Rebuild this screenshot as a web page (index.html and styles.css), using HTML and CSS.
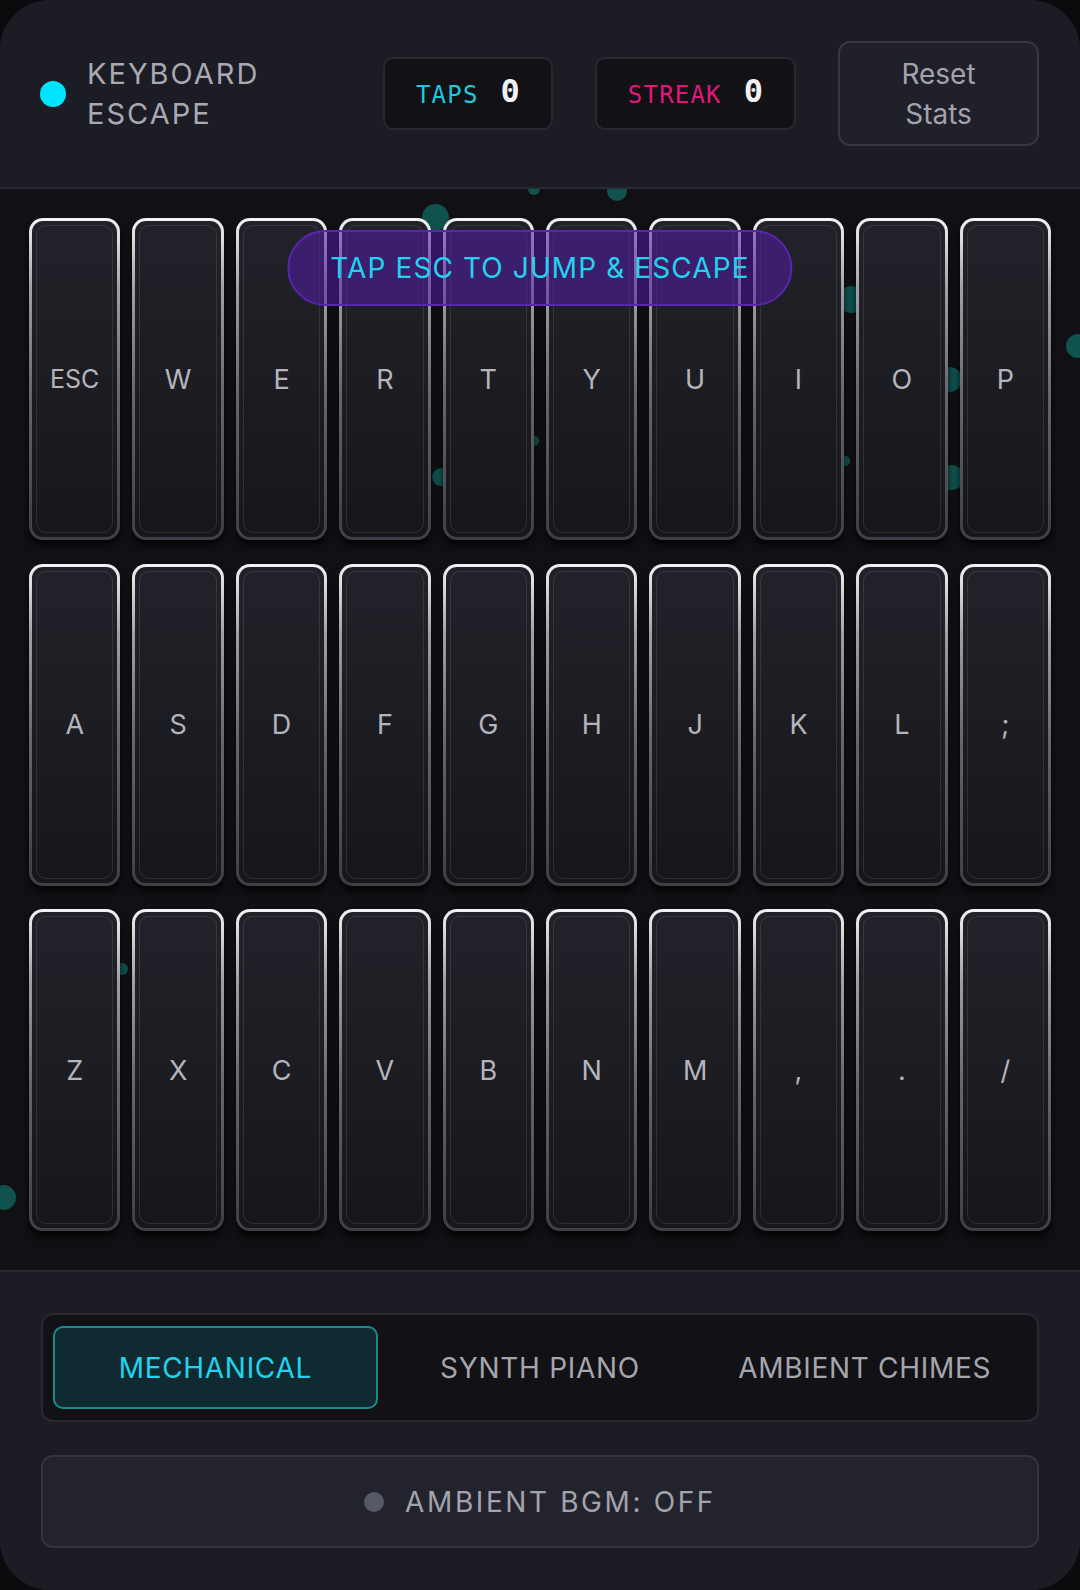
FILE: index.html
```html
<!DOCTYPE html>
<html lang="en">
<head>
    <meta charset="UTF-8">
    <meta name="viewport" content="width=device-width, initial-scale=1.0">
    <title>Keyboard Escape</title>
    <link rel="stylesheet" href="styles.css">
</head>
<body>
    <div class="app">
        <header class="header">
            <span class="status-dot"></span>
            <div class="title">Keyboard<br>Escape</div>
            <div class="header-right">
                <div class="stat">
                    <span class="stat-label taps">TAPS</span>
                    <span class="stat-value" id="taps">0</span>
                </div>
                <div class="stat">
                    <span class="stat-label streak">STREAK</span>
                    <span class="stat-value" id="streak">0</span>
                </div>
                <button class="reset-button">Reset Stats</button>
            </div>
        </header>

        <main class="board">
            <span class="particle" style="left:422px;top:15px;width:27px;height:27px"></span>
            <span class="particle" style="left:528px;top:-6px;width:12px;height:12px"></span>
            <span class="particle" style="left:607px;top:-8px;width:20px;height:20px"></span>
            <span class="particle" style="left:1066px;top:145px;width:24px;height:24px"></span>
            <span class="particle" style="left:838px;top:97px;width:27px;height:27px"></span>
            <span class="particle" style="left:937px;top:178px;width:25px;height:25px"></span>
            <span class="particle" style="left:939px;top:276px;width:25px;height:25px"></span>
            <span class="particle" style="left:840px;top:267px;width:10px;height:10px"></span>
            <span class="particle" style="left:432px;top:279px;width:18px;height:18px"></span>
            <span class="particle" style="left:529px;top:247px;width:10px;height:10px"></span>
            <span class="particle" style="left:-9px;top:996px;width:25px;height:25px"></span>
            <span class="particle" style="left:116px;top:774px;width:12px;height:12px"></span>

            <div class="hint">TAP ESC TO JUMP &amp; ESCAPE</div>

            <div class="keys" id="keys"></div>
        </main>

        <footer class="footer">
            <div class="modes">
                <button class="mode active">MECHANICAL</button>
                <button class="mode">SYNTH PIANO</button>
                <button class="mode">AMBIENT CHIMES</button>
            </div>
            <button class="bgm-button"><span class="bgm-dot"></span>AMBIENT BGM: OFF</button>
        </footer>
    </div>

    <script>
        const rows = [
            ["ESC", "W", "E", "R", "T", "Y", "U", "I", "O", "P"],
            ["A", "S", "D", "F", "G", "H", "J", "K", "L", ";"],
            ["Z", "X", "C", "V", "B", "N", "M", ",", ".", "/"]
        ];

        const keys = document.getElementById('keys');
        rows.forEach(row => {
            row.forEach(label => {
                const key = document.createElement('div');
                key.className = label === "ESC" ? "key key-esc" : "key";
                key.textContent = label;
                keys.appendChild(key);
            });
        });
    </script>
</body>
</html>
```

FILE: styles.css
```css
body {
    margin: 0;
    padding: 0;
    background: #0b0b0e;
    font-family: Inter, "Noto Sans", sans-serif;
}

.app {
    width: 1080px;
    height: 1590px;
    border-radius: 50px;
    overflow: hidden;
    background: #1b1c24;
    display: flex;
    flex-direction: column;
}

/* header */

.header {
    height: 187px;
    flex-shrink: 0;
    display: flex;
    align-items: center;
    padding: 0 41px 0 40px;
    border-bottom: 2px solid #272832;
    background: #1b1c24;
}

.status-dot {
    width: 26px;
    height: 26px;
    border-radius: 50%;
    background: #00e5ff;
    margin-right: 21px;
}

.title {
    font-size: 29px;
    line-height: 40px;
    letter-spacing: 2px;
    text-transform: uppercase;
    color: #a9a9b3;
}

.header-right {
    margin-left: auto;
    display: flex;
    align-items: center;
    gap: 42px;
}

.stat {
    height: 73px;
    box-sizing: border-box;
    padding: 0 31px;
    border: 2px solid #272832;
    border-radius: 10px;
    background: #111116;
    display: flex;
    align-items: center;
    justify-content: center;
    white-space: nowrap;
}

.stat-label {
    font-family: "DejaVu Sans Mono", monospace;
    font-size: 24px;
    letter-spacing: 1.2px;
    margin-right: 22px;
    position: relative;
    top: 1px;
}

.stat-label.taps {
    color: #1fc8dc;
}

.stat-label.streak {
    color: #e0197a;
}

.stat-value {
    font-family: "DejaVu Sans Mono", monospace;
    font-weight: bold;
    font-size: 32px;
    color: #f2f2f4;
    position: relative;
    top: -3px;
}

.reset-button {
    width: 201px;
    height: 105px;
    padding: 0 40px;
    border: 2px solid #363741;
    border-radius: 12px;
    background: #1f2029;
    color: #a3a3ad;
    font-family: Inter, "Noto Sans", sans-serif;
    font-size: 28px;
    line-height: 40px;
}

/* keyboard */

.board {
    position: relative;
    height: 1081px;
    flex-shrink: 0;
    box-sizing: border-box;
    padding: 29px 29px 39px;
    background: #111115;
    overflow: hidden;
}

.particle {
    position: absolute;
    border-radius: 50%;
    background: #0f524e;
}

.keys {
    position: relative;
    display: grid;
    grid-template-columns: repeat(10, 1fr);
    grid-auto-rows: 322px;
    column-gap: 12px;
    row-gap: 23.5px;
}

.key {
    position: relative;
    box-sizing: border-box;
    border: 3px solid transparent;
    border-radius: 14px;
    background:
        linear-gradient(#22232a, #16161b) padding-box,
        linear-gradient(#f4f4f4, #a0a0a6 22%, #66666e 55%, #3e3e44) border-box;
    box-shadow: 0 6px 7px rgba(0, 0, 0, 0.7);
    display: flex;
    align-items: center;
    justify-content: center;
    color: #b4b4bc;
    font-size: 27px;
}

.key::before {
    content: "";
    position: absolute;
    inset: 4px;
    border-radius: 10px;
    border: 1.5px solid rgba(255, 255, 255, 0.1);
}

.key-esc {
    font-size: 25px;
}

.hint {
    position: absolute;
    top: 41px;
    left: 50%;
    transform: translateX(-50%);
    z-index: 3;
    height: 76px;
    box-sizing: border-box;
    padding: 0 41px;
    border: 2px solid #5a25b0;
    border-radius: 38px;
    background: rgba(82, 30, 165, 0.55);
    color: #22d3ee;
    font-size: 28px;
    line-height: 72px;
    letter-spacing: 1.1px;
    white-space: nowrap;
}

/* footer */

.footer {
    flex: 1;
    border-top: 2px solid #272832;
    padding: 41px 41px 42px;
    display: flex;
    flex-direction: column;
    gap: 33px;
    background: #1b1c24;
}

.modes {
    height: 109px;
    box-sizing: border-box;
    padding: 11px 10px;
    border: 2px solid #272832;
    border-radius: 12px;
    background: #111116;
    display: grid;
    grid-template-columns: repeat(3, 1fr);
}

.mode {
    border: 2px solid transparent;
    border-radius: 10px;
    background: transparent;
    color: #a5a5ae;
    font-family: Inter, "Noto Sans", sans-serif;
    font-size: 28px;
    letter-spacing: 0.7px;
}

.mode.active {
    border-color: #1a8a8f;
    background: #0f2a30;
    color: #22d3ee;
}

.bgm-button {
    height: 93px;
    border: 2px solid #33343e;
    border-radius: 12px;
    background: #22232d;
    color: #a3a3ad;
    font-family: Inter, "Noto Sans", sans-serif;
    font-size: 28px;
    letter-spacing: 2.6px;
    display: flex;
    align-items: center;
    justify-content: center;
}

.bgm-dot {
    width: 20px;
    height: 20px;
    border-radius: 50%;
    background: #565a66;
    margin-right: 21px;
}
```
